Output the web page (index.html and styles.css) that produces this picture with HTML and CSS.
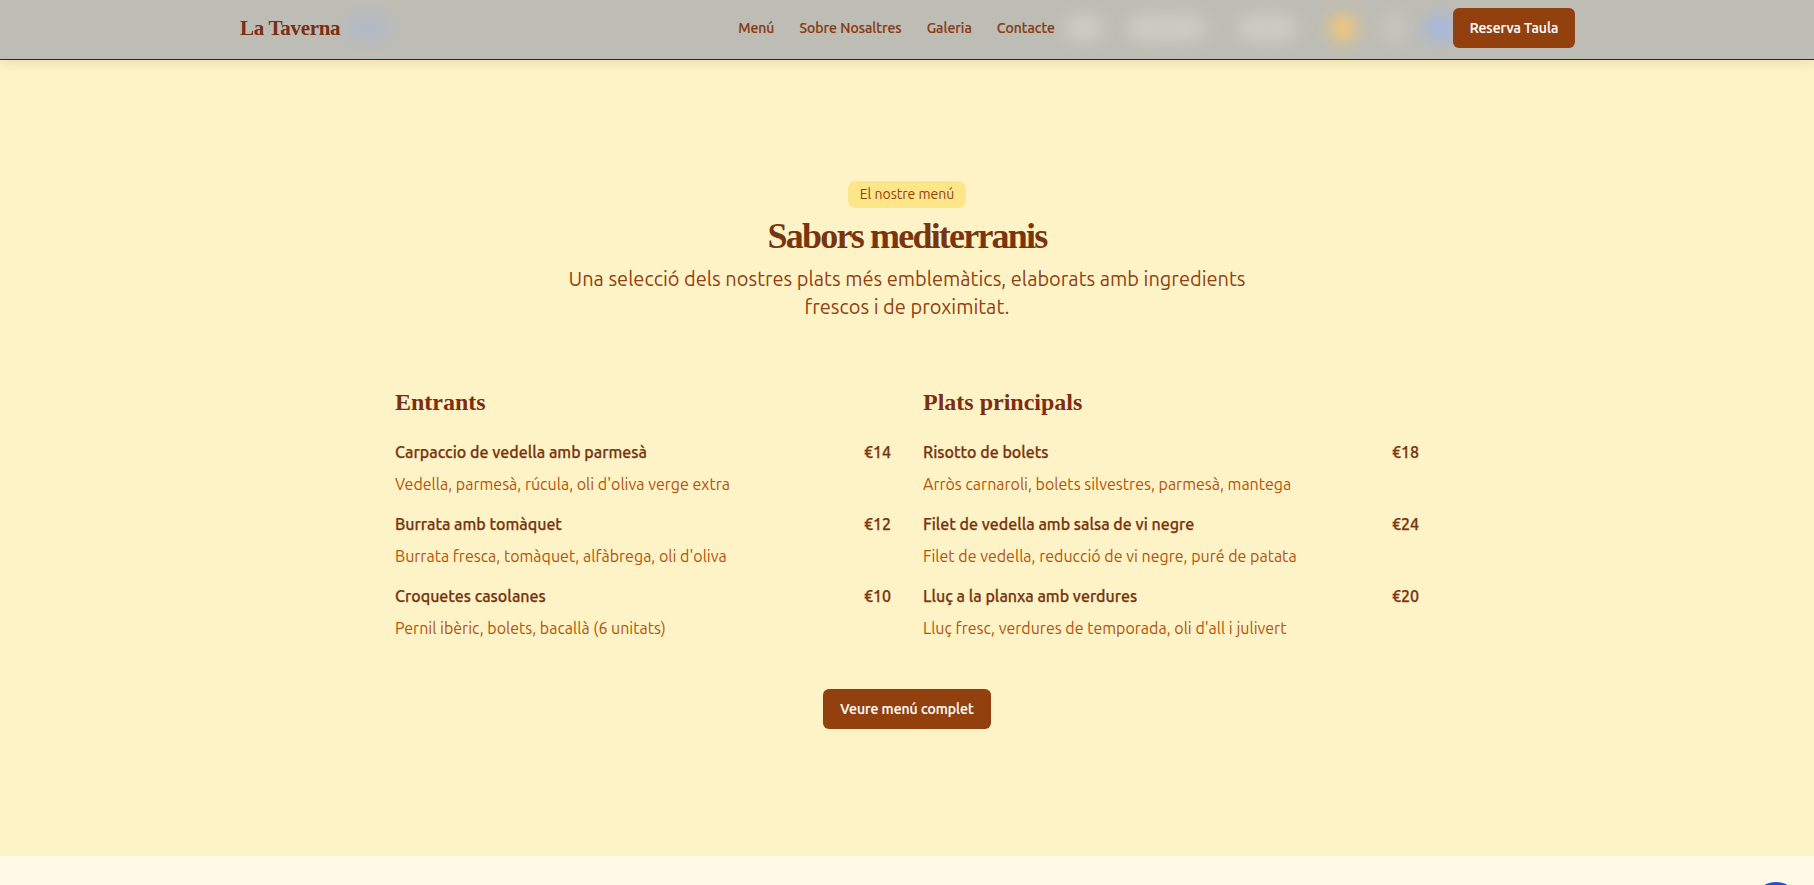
FILE: index.html
```html
<!DOCTYPE html>
<html lang="ca">
<head>
<meta charset="utf-8">
<title>La Taverna</title>
<link rel="stylesheet" href="styles.css">
</head>
<body>
<header class="site-header">
  <span class="blur-blob blob-a"></span>
  <span class="blur-blob blob-b"></span>
  <span class="blur-blob blob-c"></span>
  <span class="blur-blob blob-d"></span>
  <span class="blur-blob blob-e"></span>
  <span class="blur-blob blob-f"></span>
  <span class="blur-blob blob-g"></span>
  <div class="header-inner">
    <a class="logo" href="#">La Taverna</a>
    <div class="header-right">
      <nav class="main-nav">
        <a href="#">Menú</a>
        <a href="#">Sobre Nosaltres</a>
        <a href="#">Galeria</a>
        <a href="#">Contacte</a>
      </nav>
      <div class="nav-spacer"></div>
      <a class="btn btn-header" href="#">Reserva Taula</a>
    </div>
  </div>
</header>

<main>
  <section class="menu-section">
    <div class="section-head">
      <span class="badge">El nostre menú</span>
      <h2 class="section-title">Sabors mediterranis</h2>
      <p class="section-sub">Una selecció dels nostres plats més emblemàtics, elaborats amb ingredients frescos i de proximitat.</p>
    </div>

    <div class="menu-grid">
      <div class="menu-col">
        <h3 class="col-title">Entrants</h3>
        <div class="dish">
          <div class="dish-row"><span class="dish-name">Carpaccio de vedella amb parmesà</span><span class="dish-price">€14</span></div>
          <p class="dish-desc">Vedella, parmesà, rúcula, oli d'oliva verge extra</p>
        </div>
        <div class="dish">
          <div class="dish-row"><span class="dish-name">Burrata amb tomàquet</span><span class="dish-price">€12</span></div>
          <p class="dish-desc">Burrata fresca, tomàquet, alfàbrega, oli d'oliva</p>
        </div>
        <div class="dish">
          <div class="dish-row"><span class="dish-name">Croquetes casolanes</span><span class="dish-price">€10</span></div>
          <p class="dish-desc">Pernil ibèric, bolets, bacallà (6 unitats)</p>
        </div>
      </div>
      <div class="menu-col">
        <h3 class="col-title">Plats principals</h3>
        <div class="dish">
          <div class="dish-row"><span class="dish-name">Risotto de bolets</span><span class="dish-price">€18</span></div>
          <p class="dish-desc">Arròs carnaroli, bolets silvestres, parmesà, mantega</p>
        </div>
        <div class="dish">
          <div class="dish-row"><span class="dish-name">Filet de vedella amb salsa de vi negre</span><span class="dish-price">€24</span></div>
          <p class="dish-desc">Filet de vedella, reducció de vi negre, puré de patata</p>
        </div>
        <div class="dish">
          <div class="dish-row"><span class="dish-name">Lluç a la planxa amb verdures</span><span class="dish-price">€20</span></div>
          <p class="dish-desc">Lluç fresc, verdures de temporada, oli d'all i julivert</p>
        </div>
      </div>
    </div>

    <div class="cta">
      <a class="btn btn-cta" href="#">Veure menú complet</a>
    </div>
  </section>
  <section class="next-section"></section>
</main>
<span class="chat-bubble"></span>
</body>
</html>
```

FILE: styles.css
```css
* { box-sizing: border-box; }
html, body { margin: 0; padding: 0; }
body {
  font-family: "Ubuntu", "Lato", "Noto Sans", sans-serif;
  background: #fffbeb;
  color: #78350f;
  overflow: hidden;
}
a { text-decoration: none; color: inherit; }

.site-header {
  position: relative;
  z-index: 10;
  height: 60px;
  background: #bebdb5;
  border-bottom: 1px solid #2b2b2b;
  box-shadow: 0 4px 10px rgba(120, 90, 40, 0.12);
  overflow: hidden;
}
.header-inner {
  position: relative;
  max-width: 1400px;
  margin: 0 auto;
  padding: 0 32px 0 33px;
  height: 56px;
  display: flex;
  align-items: center;
  justify-content: space-between;
}
.logo {
  font-family: "Liberation Serif", "Times New Roman", serif;
  font-weight: 700;
  font-size: 21px;
  color: #7c2d12;
  letter-spacing: -0.3px;
}
.header-right {
  display: flex;
  align-items: center;
}
.main-nav {
  display: flex;
  gap: 25px;
}
.main-nav a {
  font-family: "Ubuntu Medium", "Ubuntu", "Lato", sans-serif;
  font-size: 14px;
  font-weight: 500;
  color: #8a3a10;
  -webkit-text-stroke: 0.2px currentColor;
}
.nav-spacer { width: 398px; }

.blur-blob {
  position: absolute;
  top: 14px;
  height: 28px;
  border-radius: 14px;
  filter: blur(8px);
}
.blob-a { left: 345px; width: 46px; background: rgba(168, 184, 214, 0.5); }
.blob-b { left: 1065px; width: 38px; background: rgba(215, 214, 205, 0.6); }
.blob-c { left: 1128px; width: 78px; background: rgba(215, 214, 205, 0.6); }
.blob-d { left: 1238px; width: 58px; background: rgba(215, 214, 205, 0.6); }
.blob-e { left: 1330px; width: 26px; background: rgba(250, 200, 110, 0.85); }
.blob-f { left: 1384px; width: 22px; background: rgba(212, 211, 202, 0.5); }
.blob-g { left: 1424px; width: 32px; background: rgba(160, 182, 230, 0.8); }

.btn {
  display: inline-flex;
  align-items: center;
  justify-content: center;
  height: 40px;
  padding: 0 16px;
  border-radius: 6px;
  background: #92400e;
  color: #ffffff;
  font-family: "Ubuntu Medium", "Ubuntu", "Lato", sans-serif;
  font-size: 14px;
  font-weight: 500;
  -webkit-text-stroke: 0.2px currentColor;
}
.btn-header { width: 122px; }
.btn-cta { width: 168px; }

.menu-section {
  background: #fef3c7;
  padding: 121px 32px 127px;
}
.section-head {
  display: flex;
  flex-direction: column;
  align-items: center;
  text-align: center;
}
.badge {
  display: inline-block;
  height: 27px;
  line-height: 27px;
  padding: 0 12px;
  border-radius: 8px;
  background: #fde68a;
  color: #92400e;
  font-size: 14px;
}
.section-title {
  margin: 8px 0 0;
  font-family: "Liberation Serif", "Times New Roman", serif;
  font-size: 36px;
  line-height: 40px;
  font-weight: 700;
  letter-spacing: -1.8px;
  color: #78350f;
}
.section-sub {
  margin: 9px 0 0;
  max-width: 700px;
  font-size: 20px;
  line-height: 28px;
  color: #92400e;
}

.menu-grid {
  max-width: 1024px;
  margin: 67px auto 0;
  display: grid;
  grid-template-columns: 1fr 1fr;
  column-gap: 32px;
}
.menu-col {
  display: flex;
  flex-direction: column;
  gap: 16px;
}
.col-title {
  margin: 0 0 8px;
  font-family: "Liberation Serif", "Times New Roman", serif;
  font-size: 24px;
  line-height: 28px;
  font-weight: 700;
  color: #7c2d12;
}
.dish-row {
  display: flex;
  justify-content: space-between;
  font-family: "Ubuntu Medium", "Ubuntu", "Lato", sans-serif;
  font-size: 16px;
  line-height: 24px;
  font-weight: 500;
  color: #78350f;
  -webkit-text-stroke: 0.25px currentColor;
}
.dish-desc {
  margin: 8px 0 0;
  font-size: 16px;
  line-height: 24px;
  color: #b45309;
}

.cta {
  margin-top: 49px;
  display: flex;
  justify-content: center;
}

.next-section {
  height: 200px;
  background: #fff9e6;
}

.chat-bubble {
  position: fixed;
  right: 14px;
  bottom: -45px;
  width: 48px;
  height: 48px;
  border-radius: 50%;
  background: #1d4ed8;
}
```
